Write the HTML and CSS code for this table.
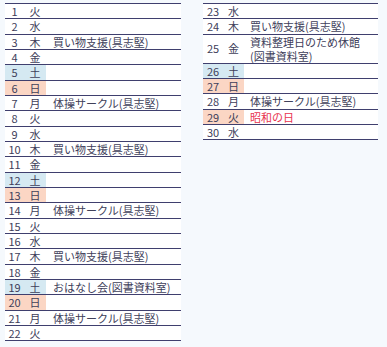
FILE: index.html
```html
<!DOCTYPE html>
<html lang="ja">
<head>
<meta charset="utf-8">
<link rel="stylesheet" href="styles.css">
</head>
<body>
<div class="page">
  <div class="cal cal-left">
    <div class="row"><span class="num">1</span><span class="dow">火</span><span class="ev"></span></div>
    <div class="row"><span class="num">2</span><span class="dow">水</span><span class="ev"></span></div>
    <div class="row"><span class="num">3</span><span class="dow">木</span><span class="ev">買い物支援(具志堅)</span></div>
    <div class="row"><span class="num">4</span><span class="dow">金</span><span class="ev"></span></div>
    <div class="row sat"><span class="num">5</span><span class="dow">土</span><span class="ev"></span></div>
    <div class="row sun"><span class="num">6</span><span class="dow">日</span><span class="ev"></span></div>
    <div class="row"><span class="num">7</span><span class="dow">月</span><span class="ev">体操サークル(具志堅)</span></div>
    <div class="row"><span class="num">8</span><span class="dow">火</span><span class="ev"></span></div>
    <div class="row"><span class="num">9</span><span class="dow">水</span><span class="ev"></span></div>
    <div class="row"><span class="num">10</span><span class="dow">木</span><span class="ev">買い物支援(具志堅)</span></div>
    <div class="row"><span class="num">11</span><span class="dow">金</span><span class="ev"></span></div>
    <div class="row sat"><span class="num">12</span><span class="dow">土</span><span class="ev"></span></div>
    <div class="row sun"><span class="num">13</span><span class="dow">日</span><span class="ev"></span></div>
    <div class="row"><span class="num">14</span><span class="dow">月</span><span class="ev">体操サークル(具志堅)</span></div>
    <div class="row"><span class="num">15</span><span class="dow">火</span><span class="ev"></span></div>
    <div class="row"><span class="num">16</span><span class="dow">水</span><span class="ev"></span></div>
    <div class="row"><span class="num">17</span><span class="dow">木</span><span class="ev">買い物支援(具志堅)</span></div>
    <div class="row"><span class="num">18</span><span class="dow">金</span><span class="ev"></span></div>
    <div class="row sat"><span class="num">19</span><span class="dow">土</span><span class="ev">おはなし会(図書資料室)</span></div>
    <div class="row sun"><span class="num">20</span><span class="dow">日</span><span class="ev"></span></div>
    <div class="row"><span class="num">21</span><span class="dow">月</span><span class="ev">体操サークル(具志堅)</span></div>
    <div class="row"><span class="num">22</span><span class="dow">火</span><span class="ev"></span></div>
  </div>
  <div class="cal cal-right">
    <div class="row"><span class="num">23</span><span class="dow">水</span><span class="ev"></span></div>
    <div class="row"><span class="num">24</span><span class="dow">木</span><span class="ev">買い物支援(具志堅)</span></div>
    <div class="row row-tall"><span class="num">25</span><span class="dow">金</span><span class="ev ev-tall"><span class="ev-line">資料整理日のため休館</span><span class="ev-line">(図書資料室)</span></span></div>
    <div class="row sat"><span class="num">26</span><span class="dow">土</span><span class="ev"></span></div>
    <div class="row sun"><span class="num">27</span><span class="dow">日</span><span class="ev"></span></div>
    <div class="row"><span class="num">28</span><span class="dow">月</span><span class="ev">体操サークル(具志堅)</span></div>
    <div class="row sun"><span class="num">29</span><span class="dow">火</span><span class="ev holiday">昭和の日</span></div>
    <div class="row"><span class="num">30</span><span class="dow">水</span><span class="ev"></span></div>
  </div>
</div>
</body>
</html>
```

FILE: styles.css
```css
html, body {
  margin: 0;
  padding: 0;
  background: #f5f9fd;
}

body {
  font-family: "Noto Sans CJK JP", "Noto Sans", sans-serif;
  font-size: 11px;
  color: #40405a;
  width: 387px;
  height: 347px;
  overflow: hidden;
}

.page {
  display: flex;
  align-items: flex-start;
  gap: 22px;
  padding: 3px 0 0 5px;
}

.cal {
  background: #fff;
  border-top: 1px solid #3f3f6e;
}

.cal-left { width: 176px; }
.cal-right { width: 175px; }

.row {
  display: grid;
  grid-template-columns: 19px 22px 1fr;
  height: 14.33px;
  border-bottom: 1px solid #3f3f6e;
  line-height: 14.33px;
}

.cal-right .row {
  grid-template-columns: 20px 21px 1fr;
}

.row-tall {
  height: 28px;
}

.num, .dow {
  display: flex;
  align-items: center;
  justify-content: center;
}

.ev {
  padding-left: 7px;
  white-space: nowrap;
}

.cal-right .ev { padding-left: 6px; }

.ev-tall {
  display: flex;
  flex-direction: column;
}

.ev-line {
  display: block;
  height: 14px;
  line-height: 14px;
  overflow: visible;
}

.sat .num, .sat .dow { background: #d5e9f2; }
.sun .num, .sun .dow { background: #fbd6c4; }

.holiday { color: #e8334f; }
```
